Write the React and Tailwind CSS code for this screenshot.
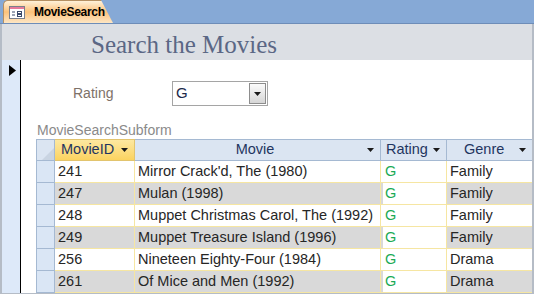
import React from "react";

const rows = [
  { id: "241", movie: "Mirror Crack'd, The (1980)", rating: "G", genre: "Family" },
  { id: "247", movie: "Mulan (1998)", rating: "G", genre: "Family" },
  { id: "248", movie: "Muppet Christmas Carol, The (1992)", rating: "G", genre: "Family" },
  { id: "249", movie: "Muppet Treasure Island (1996)", rating: "G", genre: "Family" },
  { id: "256", movie: "Nineteen Eighty-Four (1984)", rating: "G", genre: "Drama" },
  { id: "261", movie: "Of Mice and Men (1992)", rating: "G", genre: "Drama" },
];

const Arrow = () => (
  <svg width="7" height="4" viewBox="0 0 7 4" className="shrink-0">
    <path d="M0 0h7L3.5 4z" fill="#1a1a1a" />
  </svg>
);

const FormIcon = () => (
  <svg width="16" height="13" viewBox="0 0 16 13">
    <rect x="0.5" y="0.5" width="15" height="12" fill="#fff" stroke="#7a7f8c" />
    <rect x="1" y="1" width="14" height="2" fill="#e77a9a" />
    <path d="M3 6h3M3 9h3" stroke="#3b4a6b" strokeWidth="1" />
    <rect x="8.5" y="5.5" width="4" height="2" fill="none" stroke="#3b4a6b" />
    <rect x="8.5" y="8.5" width="4" height="2" fill="none" stroke="#3b4a6b" />
  </svg>
);

const App = () => {
  return (
    <div className="w-[534px] h-[294px] overflow-hidden flex flex-col bg-white" style={{ fontFamily: "'Liberation Sans', Arial, sans-serif" }}>
      {/* top strip + tab bar */}
      <div className="h-[3px] bg-[#d2d8e0]" />
      <div className="h-[24px] bg-[#86a9d6] border-b border-[#6e8db8] flex items-end pl-[3px]">
        <div className="h-[23px] w-[110px] rounded-tl-[5px] border-l border-t border-[#b69062] [clip-path:polygon(0_0,calc(100%-12px)_0,100%_100%,0_100%)] bg-gradient-to-b from-[#fff1d8] via-[#fcc27a] to-[#fde6c4] flex items-center pl-[5px]">
          <FormIcon />
          <span className="ml-[9px] text-[12px] font-bold text-black tracking-[-0.3px]">MovieSearch</span>
        </div>
      </div>

      {/* form body */}
      <div className="flex-1 flex flex-col border-l-2 border-r-2 border-b-2 border-[#b5bcc6]">
        <div className="h-[36px] bg-[#dcdfe4] pl-[89px] flex items-center">
          <h1 className="text-[25px] leading-none pt-[4px] text-[#5b6785]" style={{ fontFamily: "'Liberation Serif', 'DejaVu Serif', serif" }}>
            Search the Movies
          </h1>
        </div>

        <div className="flex-1 flex min-h-0">
          {/* record selector */}
          <div className="w-[19px] bg-[#dde9f9] border-r border-black pt-[5px] pl-[7px]">
            <svg width="7" height="11" viewBox="0 0 7 11">
              <path d="M0 0l7 5.5L0 11z" fill="#000" />
            </svg>
          </div>

          {/* detail */}
          <div className="flex-1 min-w-0 bg-white pt-[21px]">
            <div className="flex items-center h-[25px]">
              <span className="ml-[52px] w-[99px] text-[14px] text-[#7d7168]">Rating</span>
              <div className="w-[96px] h-[25px] border border-[#a5a5a5] flex items-center bg-white">
                <span className="flex-1 pl-[3px] text-[15px] text-[#1b2a4a]">G</span>
                <div className="w-[17px] h-[21px] mr-[1px] border border-[#8d8d8d] bg-gradient-to-b from-[#fbfbfb] to-[#d6d6d6] flex items-center justify-center">
                  <Arrow />
                </div>
              </div>
            </div>

            <div className="mt-[16px] ml-[16px] text-[14px] leading-[17px] text-[#8a8a8a]">MovieSearchSubform</div>

            <div className="ml-[15px] grid grid-cols-[19px_80px_246px_66px_1fr] text-[14.5px]">
              {/* header */}
              <div className="h-[22px] bg-[#dbe5f2] border-t border-b border-r border-[#a5b9d2] border-l flex items-end justify-end">
                <svg width="12" height="12" viewBox="0 0 12 12">
                  <path d="M12 0v12H0z" fill="#c9d4e2" />
                </svg>
              </div>
              <div className="h-[22px] bg-gradient-to-b from-[#fde8a0] to-[#fbd35f] border-t border-b border-r border-[#e2c46e] flex items-center pl-[6px] pr-[6px] text-[#1f3560]">
                <span className="flex-1">MovieID</span>
                <Arrow />
              </div>
              <div className="h-[22px] bg-[#dbe5f2] border-t border-b border-r border-[#a5b9d2] flex items-center pr-[6px] text-[#1f3560]">
                <span className="flex-1 text-center pl-[8px]">Movie</span>
                <Arrow />
              </div>
              <div className="h-[22px] bg-[#dbe5f2] border-t border-b border-r border-[#a5b9d2] flex items-center pl-[5px] pr-[6px] text-[#1f3560]">
                <span className="flex-1">Rating</span>
                <Arrow />
              </div>
              <div className="h-[22px] bg-[#dbe5f2] border-t border-b border-[#a5b9d2] flex items-center pl-[17px] pr-[6px] text-[#1f3560]">
                <span className="flex-1">Genre</span>
                <Arrow />
              </div>

              {rows.map((r, i) => {
                const bg = i % 2 === 1 ? "bg-[#d9d9d9]" : "bg-white";
                return (
                  <React.Fragment key={r.id}>
                    <div className="h-[22px] bg-[#dae6f5] border-l border-r border-b border-[#a5b9d2]" />
                    <div className={`h-[22px] ${bg} border-r border-b border-[#f6e6a2] flex items-center pl-[3px] text-[#262626]`}>{r.id}</div>
                    <div className={`h-[22px] ${bg} border-r border-b border-[#f6e6a2] flex items-center pl-[3px] text-[#262626] whitespace-nowrap overflow-hidden`}>{r.movie}</div>
                    <div className={`h-[22px] ${bg} border-r border-b border-[#f6e6a2] pl-[2px]`}>
                      <div className="h-full bg-white flex items-center pl-[2px] text-[#1aaa55]">{r.rating}</div>
                    </div>
                    <div className={`h-[22px] ${bg} border-b border-[#f6e6a2] flex items-center pl-[3px] text-[#262626]`}>{r.genre}</div>
                  </React.Fragment>
                );
              })}
            </div>
          </div>
        </div>
      </div>
    </div>
  );
};

export default App;
